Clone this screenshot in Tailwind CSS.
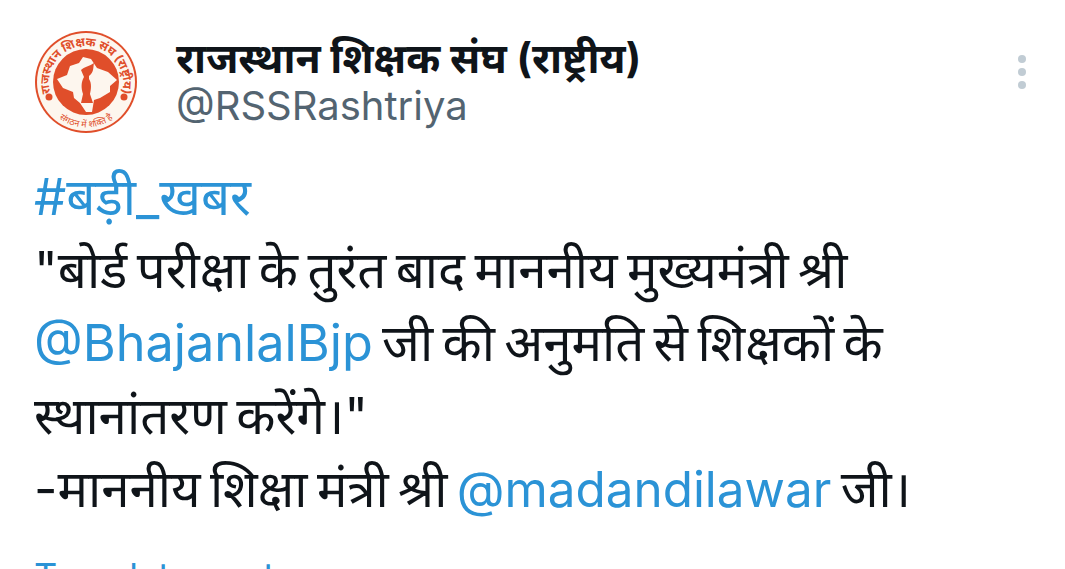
<!DOCTYPE html>
<html lang="hi">
  <head>
    <meta charset="UTF-8" />
    <meta name="viewport" content="width=device-width, initial-scale=1.0" />
    <title>Tweet</title>
    <script src="https://cdn.jsdelivr.net/npm/@tailwindcss/browser@4"></script>
  </head>
  <body class="bg-white h-[569px] overflow-hidden font-['Inter','Noto_Sans',sans-serif]">
    <div class="pl-[34px] pr-[33px] pt-[30px]">
      <!-- header -->
      <div class="flex items-start">
        <svg class="w-[104px] h-[104px] shrink-0" viewBox="0 0 104 104">
          <circle cx="52" cy="52" r="51" fill="#e04e2a" />
          <circle cx="52" cy="52" r="49" fill="#fdf6ee" />
          <circle cx="52" cy="52" r="33" fill="#e04e2a" />
          <path d="M23 49 L33 45 L36 36 L45 33 L49 27 L57 29 L63 38 L74 42 L83 50 L76 56 L76 62 L66 68 L60 70 L58 82 L52 82 L46 73 L40 68 L39 62 L29 58 Z" fill="#fdf6ee" />
          <path d="M47 40 C50 37 56 36 60 33 C59 38 60 42 55 46 L55 49 C58 53 57 60 56 64 L59 73 L47 73 L49 64 C47 58 47 52 50 47 Z" fill="#e04e2a" />
          <circle cx="15" cy="67" r="3.5" fill="#e04e2a" />
          <circle cx="90" cy="67" r="3.5" fill="#e04e2a" />
          <defs>
            <path id="arcTop" d="M17 65 A37 37 0 1 1 87 65" />
            <path id="arcBottom" d="M15 78 A45 45 0 0 0 89 78" />
          </defs>
          <text font-size="12" font-weight="700" fill="#e04e2a"><textPath href="#arcTop" startOffset="50%" text-anchor="middle">राजस्थान शिक्षक संघ (राष्ट्रीय)</textPath></text>
          <text font-size="9" fill="#e04e2a"><textPath href="#arcBottom" startOffset="50%" text-anchor="middle">संगठन में शक्ति है</textPath></text>
        </svg>
        <div class="ml-[38px] pt-[3px] flex-1">
          <div class="text-[41px] leading-[50px] font-bold text-[#0f1419]">राजस्थान शिक्षक संघ (राष्ट्रीय)</div>
          <div class="text-[40px] leading-[46px] text-[#536471]">@RSSRashtriya</div>
        </div>
        <div class="flex flex-col gap-[5px] pt-[25px] pr-[6px]">
          <span class="w-[8px] h-[8px] rounded-full bg-[#c1ccd4]"></span>
          <span class="w-[8px] h-[8px] rounded-full bg-[#c1ccd4]"></span>
          <span class="w-[8px] h-[8px] rounded-full bg-[#c1ccd4]"></span>
        </div>
      </div>
      <!-- body -->
      <div class="mt-[26px] text-[51px] leading-[73px] [word-spacing:-5px] text-[#0f1419] whitespace-nowrap">
        <div class="text-[#2b93d6]">#बड़ी_खबर</div>
        <div>"बोर्ड परीक्षा के तुरंत बाद माननीय मुख्यमंत्री श्री</div>
        <div><span class="text-[#2b93d6] text-[50.4px]">@BhajanlalBjp</span> जी की अनुमति से शिक्षकों के</div>
        <div>स्थानांतरण करेंगे।"</div>
        <div>-माननीय शिक्षा मंत्री श्री <span class="text-[#2b93d6] text-[49.4px]">@madandilawar</span> जी।</div>
        <div class="mt-[14px] text-[#2b93d6] text-[36px] [word-spacing:0]">Translate post</div>
      </div>
    </div>
  </body>
</html>
